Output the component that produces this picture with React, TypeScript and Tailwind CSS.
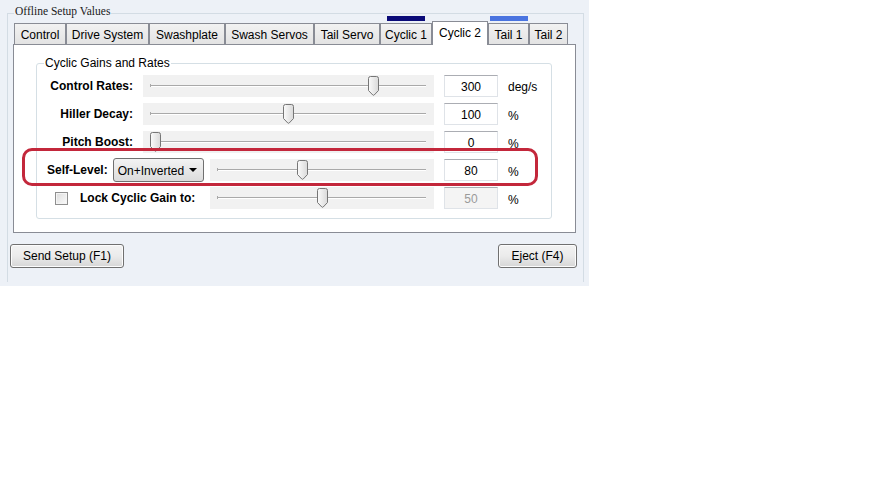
import React from 'react';

const tabs = [
  { name: 'Control', w: 52 },
  { name: 'Drive System', w: 83 },
  { name: 'Swashplate', w: 76 },
  { name: 'Swash Servos', w: 89 },
  { name: 'Tail Servo', w: 66 },
  { name: 'Cyclic 1', w: 52, bar: 'bg-[#0a0a78]' },
  { name: 'Cyclic 2', w: 56, active: true },
  { name: 'Tail 1', w: 41, bar: 'bg-[#4a74e0]' },
  { name: 'Tail 2', w: 39 },
];

const Thumb: React.FC = () => (
  <svg width="11" height="20" viewBox="0 0 11 20">
    <defs>
      <linearGradient id="thumbGrad" x1="0" y1="0" x2="1" y2="0">
        <stop offset="0" stopColor="#fbfbfb" />
        <stop offset="1" stopColor="#d9d9d9" />
      </linearGradient>
    </defs>
    <path
      d="M0.5 2.5 Q0.5 0.5 2.5 0.5 H8.5 Q10.5 0.5 10.5 2.5 V14.5 L6.2 19 Q5.5 19.6 4.8 19 L0.5 14.5 Z"
      fill="url(#thumbGrad)"
      stroke="#767676"
    />
  </svg>
);

// pos = thumb centre in px from the slider box's left edge
const Slider: React.FC<{ width: number; pos: number }> = ({ width, pos }) => (
  <div className="relative h-[22px] bg-[#f1f1f1] shrink-0" style={{ width }}>
    <div className="absolute left-[7px] right-[8px] top-[10px] h-px bg-[#a9a9a9]" />
    <div className="absolute left-[7px] right-[8px] top-[11px] h-px bg-white" />
    <div className="absolute left-[7px] top-[9px] w-px h-[3px] bg-[#a9a9a9]" />
    <div className="absolute top-[1px]" style={{ left: pos - 5 }}>
      <Thumb />
    </div>
  </div>
);

const ValueBox: React.FC<{ value: string; disabled?: boolean }> = ({ value, disabled }) => (
  <div
    className={`w-[54px] h-[22px] ml-[10px] flex items-center justify-center pt-[2px] border border-[#dfe3e8] border-t-[#abadb3] ${
      disabled ? 'bg-[#f4f4f4] text-[#9a9a9a]' : 'bg-white text-black'
    }`}
  >
    {value}
  </div>
);

const Row: React.FC<{ children: React.ReactNode }> = ({ children }) => (
  <div className="flex items-center h-[28px]">{children}</div>
);

const Button: React.FC<{ label: string; w: number }> = ({ label, w }) => (
  <div
    className="h-[24px] rounded-[3px] border border-[#707070] bg-gradient-to-b from-[#f3f3f3] via-[#ebebeb] to-[#d6d6d6] flex items-center justify-center text-black shadow-[inset_0_0_0_1px_#fcfcfc]"
    style={{ width: w }}
  >
    {label}
  </div>
);

export default function App() {
  return (
    <div
      className="relative w-[589px] h-[286px] bg-[#edf1f7] pt-[13px] pl-[7px] text-[12px] text-black"
      style={{ fontFamily: '"Liberation Sans", Arial, sans-serif' }}
    >
      {/* Offline Setup Values frame */}
      <div className="relative w-[577px] h-[269px] border-l border-t border-r border-[#d3dce4]">
        <div
          className="absolute left-[6px] top-[-11px] px-[1px] bg-[#edf1f7] leading-[16px] text-[11.5px] text-[#1a1a1a]"
          style={{ fontFamily: '"Liberation Serif", "Times New Roman", serif' }}
        >
          Offline Setup Values
        </div>

        <div className="pl-[5px] pt-[2px]">
          {/* Tab strip */}
          <div className="flex items-end h-[28px] pl-px">
            {tabs.map((t) => (
              <div key={t.name} className="flex flex-col items-center justify-between h-[28px]" style={{ width: t.w }}>
                <div className={`h-[5px] ${t.bar ? `${t.bar} w-[38px]` : ''}`} />
                {t.active ? (
                  <div className="relative z-10 -mb-px w-[56px] h-[25px] bg-white border-l border-t border-r border-[#898c95] flex justify-center pt-[4px] leading-[14px]">
                    {t.name}
                  </div>
                ) : (
                  <div className="w-full h-[21px] border-l border-t border-r border-[#898c95] bg-gradient-to-b from-[#f2f2f2] to-[#e3e3e3] flex items-center justify-center pt-[2px]">
                    {t.name}
                  </div>
                )}
              </div>
            ))}
          </div>

          {/* Tab panel */}
          <div className="w-[563px] h-[189px] border border-[#898c95] bg-white pl-[22px] pt-[18px]">
            <div className="relative w-[516px] h-[156px] border border-[#d5dfe5] rounded-[3px] pt-[8px]">
              <div className="absolute left-[7px] top-[-9px] px-[1px] bg-white leading-[16px]">Cyclic Gains and Rates</div>

              <Row>
                <div className="w-[96px] text-right font-bold">Control Rates:</div>
                <div className="ml-[10px]"><Slider width={291} pos={230} /></div>
                <ValueBox value="300" />
                <div className="ml-[10px] pt-[2px]">deg/s</div>
              </Row>
              <Row>
                <div className="w-[96px] text-right font-bold">Hiller Decay:</div>
                <div className="ml-[10px]"><Slider width={291} pos={145} /></div>
                <ValueBox value="100" />
                <div className="ml-[10px] pt-[3px]">%</div>
              </Row>
              <Row>
                <div className="w-[96px] text-right font-bold">Pitch Boost:</div>
                <div className="ml-[10px]"><Slider width={291} pos={12} /></div>
                <ValueBox value="0" />
                <div className="ml-[10px] pt-[3px]">%</div>
              </Row>
              <Row>
                <div className="w-[173px] flex items-center shrink-0">
                  <div className="ml-[10px] font-bold">Self-Level:</div>
                  <div className="ml-[5px] w-[91px] h-[24px] rounded-[3px] border border-[#707070] bg-gradient-to-b from-[#f3f3f3] to-[#dcdcdc] flex items-center justify-between pl-[4px] pr-[6px]">
                    <span className="pt-[1px]">On+Inverted</span>
                    <span className="w-0 h-0 border-x-[4px] border-x-transparent border-t-[4px] border-t-black" />
                  </div>
                </div>
                <Slider width={224} pos={92} />
                <ValueBox value="80" />
                <div className="ml-[10px] pt-[3px]">%</div>
              </Row>
              <Row>
                <div className="w-[173px] flex items-center shrink-0">
                  <div className="ml-[18px] w-[13px] h-[13px] border border-[#8f8f8f] bg-gradient-to-br from-[#dcdcdc] to-[#fbfbfb] shadow-[inset_0_0_0_1px_#f4f4f4]" />
                  <div className="ml-[12px] font-bold">Lock Cyclic Gain to:</div>
                </div>
                <Slider width={224} pos={112} />
                <ValueBox value="50" disabled />
                <div className="ml-[10px] pt-[3px]">%</div>
              </Row>
            </div>
          </div>

          {/* Buttons */}
          <div className="flex justify-between w-[567px] ml-[-3px] mt-[11px]">
            <Button label="Send Setup (F1)" w={114} />
            <Button label="Eject (F4)" w={79} />
          </div>
        </div>
      </div>

      {/* red annotation around the Self-Level row */}
      <div className="absolute left-[22px] top-[148px] w-[516px] h-[38px] border-[3px] border-[#c3273b] rounded-[10px] pointer-events-none" />
    </div>
  );
}
